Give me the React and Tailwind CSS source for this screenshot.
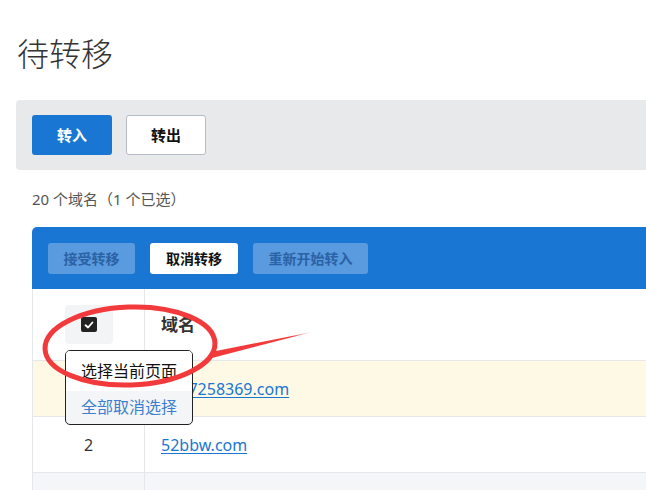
const rows = [
  { id: 1, domain: "2017258369.com", selected: true },
  { id: 2, domain: "52bbw.com" },
  { id: 3, domain: "" },
];

const CheckIcon = () => (
  <svg viewBox="0 0 16 16" className="w-[10px] h-[10px]" fill="none">
    <path d="M2.5 8.5 L6.5 12 L13.5 4" stroke="white" strokeWidth="3" strokeLinecap="round" strokeLinejoin="round" />
  </svg>
);

const Markup = () => (
  // red highlight loop with the pointer line
  <svg className="absolute left-0 top-0 pointer-events-none" width="646" height="490" viewBox="0 0 646 490">
    <defs>
      <linearGradient id="fade" x1="213" y1="355" x2="312" y2="333" gradientUnits="userSpaceOnUse">
        <stop offset="0" stopColor="#f23a3d" />
        <stop offset="0.8" stopColor="#f23a3d" />
        <stop offset="1" stopColor="#f23a3d" stopOpacity="0.2" />
      </linearGradient>
    </defs>
    <ellipse cx="130" cy="346" rx="85" ry="39" fill="none" stroke="#f23a3d" strokeWidth="5" transform="rotate(-2 130 346)" />
    <path d="M211 352 L312 332 L212 358 Z" fill="url(#fade)" />
  </svg>
);

export default function App() {
  return (
    <div className="relative w-[646px] h-[490px] overflow-hidden bg-white pl-4 pt-[33px] font-['Noto_Sans','Noto_Sans_CJK_SC',sans-serif] text-[#333]">
      <h1 className="text-[32px] leading-[42px] font-light text-[#333] pl-px">待转移</h1>

      <div className="mt-[25px] h-[70px] w-[700px] bg-[#e8e9eb] rounded-[4px] flex items-center gap-[14px] pl-4">
        <button className="w-[80px] h-[40px] rounded-[3px] bg-[#1976d2] text-white text-[15px] font-bold">转入</button>
        <button className="w-[80px] h-[40px] rounded-[3px] bg-white border border-[#b3bcc7] text-[#111] text-[15px] font-bold">转出</button>
      </div>

      <div className="pl-4">
        <p className="mt-[19px] text-[15px] leading-[20px] text-[#555]">20 个域名（1 个已选）</p>

        <div className="mt-[18px] h-[62px] w-[700px] bg-[#1976d2] rounded-tl-[5px] flex items-center gap-[15px] pl-4">
          <button className="w-[87px] h-[31px] rounded-[3px] bg-[#5a9ade] text-[#2a62a6] text-[14px] font-semibold">接受转移</button>
          <button className="w-[88px] h-[31px] rounded-[3px] bg-white text-[#111] text-[14px] font-semibold">取消转移</button>
          <button className="w-[115px] h-[31px] rounded-[3px] bg-[#5a9ade] text-[#2a62a6] text-[14px] font-semibold">重新开始转入</button>
        </div>

        <div className="w-[700px] border-l border-[#e5e7eb]">
          <div className="flex h-[72px] border-b border-[#e5e7eb] bg-white">
            <div className="w-[112px] border-r border-[#e5e7eb] flex items-center justify-center">
              <div className="w-[48px] h-[39px] bg-[#f3f4f6] rounded-[4px] flex items-center justify-center">
                <span className="w-4 h-[15px] rounded-[2px] bg-[#222] flex items-center justify-center">
                  <CheckIcon />
                </span>
              </div>
            </div>
            <div className="flex-1 flex items-center pl-4 text-[17px] font-bold text-[#333]">域名</div>
          </div>

          {rows.map((r) => (
            <div
              key={r.id}
              className={`flex h-[56px] border-b border-[#e5e7eb] ${r.selected ? "bg-[#fef9e5]" : r.id === 3 ? "bg-[#f5f6f8]" : "bg-white"}`}
            >
              <div className="w-[112px] border-r border-[#e5e7eb] flex items-center justify-center text-[16px] text-[#333]">
                {r.id === 2 ? r.id : ""}
              </div>
              <div className="flex-1 flex items-center pl-4">
                {r.domain && (
                  <a className="text-[16px] text-[#1976d2] underline underline-offset-2">{r.domain}</a>
                )}
              </div>
            </div>
          ))}
        </div>
      </div>

      {/* select-all dropdown under the header checkbox */}
      <div className="absolute left-[65px] top-[350px] w-[128px] h-[75px] border border-[#222] rounded-[5px] overflow-hidden bg-[#f4f5f7] text-[16px]">
        <div className="h-[40px] bg-white flex items-center justify-center text-[#111]">选择当前页面</div>
        <div className="h-[33px] flex items-center justify-center text-[#3a7fd0] pb-[2px]">全部取消选择</div>
      </div>

      <Markup />
    </div>
  );
}
